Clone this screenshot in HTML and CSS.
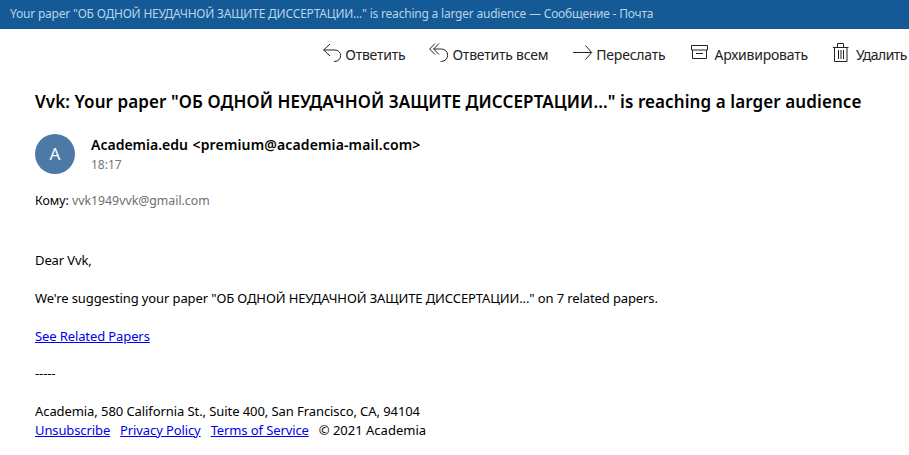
FILE: index.html
```html
<!DOCTYPE html>
<html lang="ru">
<head>
<meta charset="utf-8">
<title>Почта</title>
<link rel="stylesheet" href="styles.css">
</head>
<body>
<header class="titlebar">Your paper "ОБ ОДНОЙ НЕУДАЧНОЙ ЗАЩИТЕ ДИССЕРТАЦИИ..." is reaching a larger audience — Сообщение - Почта</header>
<nav class="toolbar">
  <span class="action act-reply"><svg class="icon" width="18" height="20" viewBox="0 0 18 20"><path d="M7 2 L0.7 8 L7 14 M0.7 8 H12 A5.7 5.7 0 0 1 12 19.4 H11"/></svg>Ответить</span>
  <span class="action act-all"><svg class="icon" width="19" height="20" viewBox="0 0 19 20"><path d="M6 1.5 L0.7 7 L6 12.5 M10 1.5 L4.7 7 L10 12.5 M4.7 7 H12.5 A6.2 6.2 0 0 1 12.5 19.4 H11.5"/></svg>Ответить всем</span>
  <span class="action act-fwd"><svg class="icon" width="20" height="20" viewBox="0 0 20 20"><path d="M0 10.5 H18.5 M12.5 3.5 L18.7 10.5 L12.5 17.5"/></svg>Переслать</span>
  <span class="action act-arch"><svg class="icon" width="17" height="20" viewBox="0 0 17 20"><path d="M0.5 3.5 H16.5 V8 H0.5 Z M1.5 8 V16.5 H15.5 V8 M5 11.5 H12"/></svg>Архивировать</span>
  <span class="action act-del"><svg class="icon" width="16" height="20" viewBox="0 0 16 20"><path d="M0 5.5 H15.5 M4.5 5.5 V1.5 H10.5 V5.5 M1.5 5.5 V19.5 H14 V5.5 M5.5 8 V17 M8 8 V17 M10.5 8 V17"/></svg>Удалить</span>
</nav>
<main class="message">
  <h1 class="subject">Vvk: Your paper "ОБ ОДНОЙ НЕУДАЧНОЙ ЗАЩИТЕ ДИССЕРТАЦИИ..." is reaching a larger audience</h1>
  <div class="sender">
    <div class="avatar">A</div>
    <div class="sender-info">
      <div class="sender-name"><span class="name">Academia.edu</span> <span class="email">&lt;premium@academia-mail.com&gt;</span></div>
      <div class="time">18:17</div>
    </div>
  </div>
  <div class="to">Кому: <span class="to-addr">vvk1949vvk@gmail.com</span></div>
  <div class="body">
    <p class="greet">Dear Vvk,</p>
    <p>We're suggesting your paper "ОБ ОДНОЙ НЕУДАЧНОЙ ЗАЩИТЕ ДИССЕРТАЦИИ..." on 7 related papers.</p>
    <p><a href="#">See Related Papers</a></p>
    <p>-----</p>
    <p class="address">Academia, 580 California St., Suite 400, San Francisco, CA, 94104</p>
    <p class="links"><a href="#">Unsubscribe</a><a href="#">Privacy Policy</a><a href="#">Terms of Service</a><span class="copy">© 2021 Academia</span></p>
  </div>
</main>
</body>
</html>
```
FILE: styles.css
```css
* { box-sizing: border-box; }
html, body { margin: 0; padding: 0; height: 100%; overflow: hidden; }
body {
  background: #fff;
  color: #000;
  font-family: "Noto Sans", "Open Sans", sans-serif;
  width: 909px;
  height: 455px;
}
.titlebar {
  height: 29px;
  background: #135a96;
  color: #bcd3e8;
  font-size: 12px;
  letter-spacing: -0.21px;
  line-height: 28px;
  padding-left: 10px;
  white-space: nowrap;
}
.toolbar {
  height: 50px;
  display: flex;
  align-items: center;
  justify-content: flex-end;
  font-size: 14px;
  letter-spacing: -0.22px;
  color: #222;
  white-space: nowrap;
  overflow: hidden;
  padding-right: 2px;
}
.action { display: flex; align-items: center; gap: 4px; }
.icon { fill: none; stroke: #222; stroke-width: 1; flex: none; margin-top: -4px; }
.act-reply { margin-right: 24px; }
.act-all { margin-right: 25px; }
.act-fwd { margin-right: 26px; gap: 3px; }
.act-arch { margin-right: 25px; gap: 6px; }
.act-del { gap: 7px; letter-spacing: -0.5px; }
.message { padding: 0 0 0 35px; }
.subject {
  margin: 11px 0 0;
  font-size: 17px;
  letter-spacing: 0.09px;
  line-height: 24px;
  font-weight: 600;
  white-space: nowrap;
}
.sender { display: flex; margin-top: 20px; align-items: flex-start; }
.avatar {
  width: 40px; height: 40px;
  border-radius: 50%;
  background: #4d79a6;
  color: #fff;
  font-size: 17px;
  line-height: 40px;
  text-align: center;
  flex: none;
  margin-right: 16px;
}
.sender-info { padding-top: 1px; }
.sender-name { font-size: 14px; font-weight: 600; line-height: 20px; }
.name { margin-right: 1px; }
.email { letter-spacing: 0.14px; }
.time { font-size: 12px; line-height: 19px; color: #767676; }
.to { margin-top: 18px; font-size: 12.3px; line-height: 18px; }
.to-addr { color: #6e6e6e; }
.body { font-size: 13px; letter-spacing: -0.11px; line-height: 18.9px; margin-top: 41px; }
.body p { margin: 0 0 18.9px; }
.body p.address { margin: 0; letter-spacing: -0.08px; }
.body p.links { margin: 0; }
.links a { margin-right: 10px; }
.copy { letter-spacing: -0.0px; }
a { color: #0000ee; text-decoration: underline; }
```
